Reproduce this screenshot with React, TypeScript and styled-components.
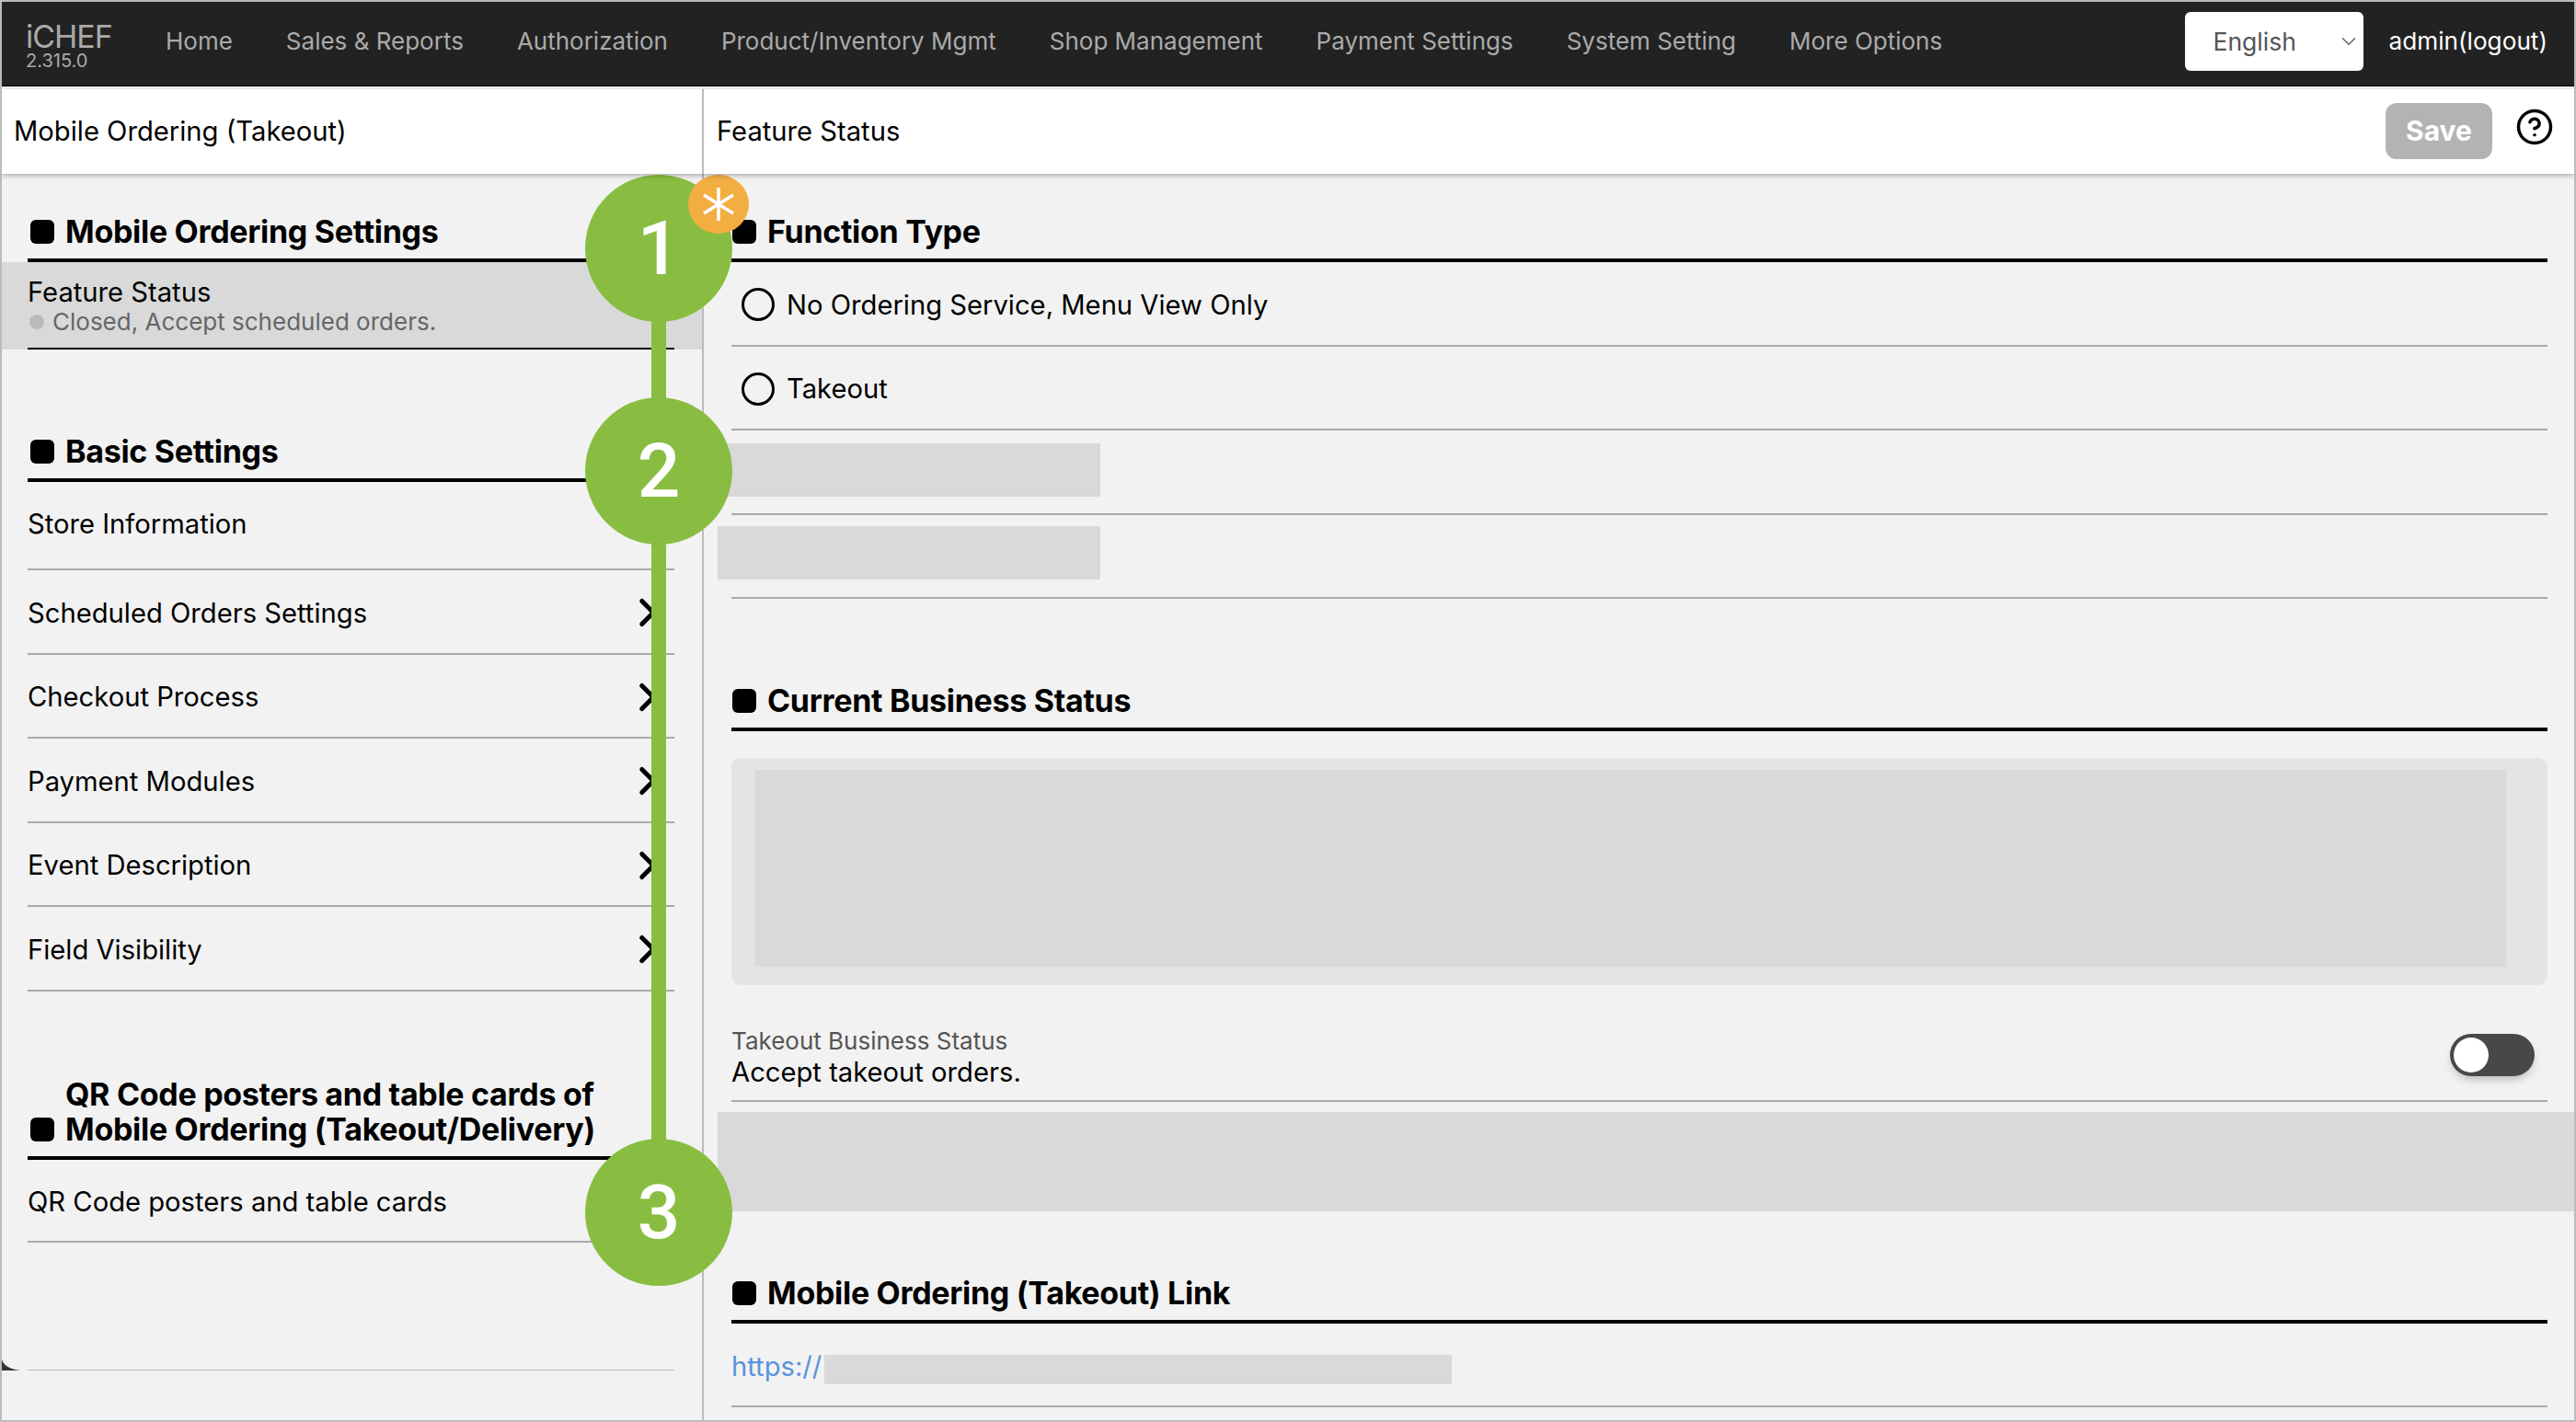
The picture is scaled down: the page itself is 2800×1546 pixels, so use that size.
import React from "react";
import styled, { createGlobalStyle } from "styled-components";
import { ChevronRight, ChevronDown, CircleHelp } from "lucide-react";

const GlobalStyle = createGlobalStyle`
  html, body {
    margin: 0;
    padding: 0;
    background: #f2f2f2;
  }
  * {
    box-sizing: border-box;
  }
`;

const Page = styled.div`
  position: relative;
  width: 2800px;
  height: 1546px;
  overflow: hidden;
  display: flex;
  flex-direction: column;
  border: 2px solid #bbb;
  background: #f2f2f2;
  color: #000;
  font-family: Inter, "Liberation Sans", sans-serif;
  font-size: 29.2px;
`;

const NavBar = styled.header`
  height: 92px;
  flex-shrink: 0;
  display: flex;
  align-items: center;
  background: #222;
  padding: 0 29px 6px 26px;
  border-bottom: 1px solid #000;
`;

const Logo = styled.div`
  width: 152px;
  color: #aaa;
  margin-top: 10px;
`;

const LogoName = styled.div`
  font-size: 34px;
  line-height: 33px;
  letter-spacing: -1px;
`;

const LogoVersion = styled.div`
  font-size: 20px;
  line-height: 20px;
`;

const NavMenu = styled.nav`
  display: flex;
  gap: 58px;
  flex: 1;
`;

const NavLink = styled.span`
  color: #aaa;
  font-size: 26px;
`;

const SelectWrap = styled.div`
  position: relative;
  width: 194px;
  height: 64px;
  margin-right: 28px;
  color: #666;
`;

const LangSelect = styled.select`
  appearance: none;
  width: 100%;
  height: 100%;
  border: 0;
  border-radius: 6px;
  background: #fff;
  color: #555;
  padding-left: 31px;
  font-family: inherit;
  font-size: 26.5px;
`;

const SelectArrow = styled(ChevronDown)`
  position: absolute;
  right: 3px;
  top: 19px;
  pointer-events: none;
`;

const UserLink = styled.span`
  color: #fff;
  font-size: 26.2px;
`;

const HeaderRow = styled.div`
  position: relative;
  z-index: 1;
  height: 92px;
  margin-top: 3px;
  flex-shrink: 0;
  display: flex;
  background: #fff;
  box-shadow: 0 2px 5px rgba(0, 0, 0, 0.28);
`;

const HeaderLeft = styled.div`
  width: 763px;
  display: flex;
  align-items: center;
  padding: 0 13px 2px;
  border-right: 2px solid #bbb;
`;

const HeaderRight = styled.div`
  flex: 1;
  display: flex;
  align-items: center;
  justify-content: space-between;
  padding: 0 22px 2px 14px;
`;

const HeaderActions = styled.div`
  display: flex;
  align-items: center;
  gap: 25px;
`;

const SaveButton = styled.button`
  width: 116px;
  height: 61px;
  border: 0;
  border-radius: 12px;
  background: #b3b3b3;
  color: #fff;
  font-family: inherit;
  font-size: 30px;
  font-weight: 700;
`;

const HelpIcon = styled(CircleHelp)`
  margin-bottom: 8px;
`;

const Body = styled.div`
  flex: 1;
  display: flex;
  min-height: 0;
`;

const Sidebar = styled.aside`
  position: relative;
  width: 763px;
  flex-shrink: 0;
  padding-top: 44px;
  border-right: 2px solid #bbb;
`;

const Main = styled.main`
  flex: 1;
  padding: 44px 29px 0 30px;
`;

const SectionHeading = styled.h2<{ $top?: number; $inset?: boolean }>`
  display: flex;
  align-items: flex-end;
  gap: 12px;
  margin: ${(p) => p.$top ?? 0}px ${(p) => (p.$inset ? "30px" : "0")} 0
    ${(p) => (p.$inset ? "28px" : "0")};
  padding: 0 0 10px ${(p) => (p.$inset ? "3px" : "1px")};
  border-bottom: 4px solid #000;
  font-size: 34px;
  line-height: 38px;
  font-weight: 700;
  letter-spacing: -0.3px;
`;

const Bullet = styled.span`
  width: 26px;
  height: 26px;
  flex-shrink: 0;
  margin-bottom: 6px;
  border-radius: 6px;
  background: #000;
`;

const SideItem = styled.div<{ $height?: number; $padTop?: number; $padBottom?: number }>`
  height: ${(p) => p.$height ?? 91.5}px;
  margin: 0 30px 0 28px;
  display: flex;
  align-items: center;
  justify-content: space-between;
  padding: ${(p) => p.$padTop ?? 3}px 4px ${(p) => p.$padBottom ?? 0}px 0;
  border-bottom: 2px solid #aaa;
`;

const SelectedBand = styled.div`
  height: 95px;
  padding: 0 30px 0 28px;
  background: #d9d9d9;
`;

const SelectedInner = styled.div`
  height: 100%;
  padding-top: 15px;
  border-bottom: 2px solid #000;
`;

const SelectedTitle = styled.div`
  line-height: 36px;
`;

const StatusLine = styled.div`
  display: flex;
  align-items: center;
  gap: 9px;
  color: #666;
  font-size: 26px;
  line-height: 28px;
`;

const StatusDot = styled.span`
  width: 16px;
  height: 16px;
  margin-left: 2px;
  border-radius: 50%;
  background: #bbb;
`;

const SideFooterLine = styled.div`
  margin: 138px 30px 0 28px;
  border-top: 1px solid #bbb;
`;

const CornerMark = styled.svg`
  position: absolute;
  left: 0;
  bottom: 54px;
  display: block;
`;

const OptionRow = styled.div`
  height: 91.5px;
  display: flex;
  align-items: center;
  gap: 13px;
  padding: 3px 0 0 11px;
  border-bottom: 2px solid #aaa;
`;

const Radio = styled.span`
  width: 36px;
  height: 36px;
  border: 3px solid #000;
  border-radius: 50%;
`;

const MaskRow = styled.div<{ $padTop: number }>`
  height: 91.5px;
  padding-top: ${(p) => p.$padTop}px;
  border-bottom: 2px solid #aaa;
`;

const MaskBlock = styled.div`
  width: 416px;
  height: 58px;
  margin-left: -15px;
  background: #d9d9d9;
`;

const InfoPanel = styled.div`
  height: 247px;
  margin-top: 29px;
  padding: 13px 45px 20px 26px;
  border-radius: 10px;
  background: #e4e4e4;
`;

const InfoPanelMask = styled.div`
  height: 100%;
  background: #d9d9d9;
`;

const StatusRow = styled.div`
  height: 127px;
  display: flex;
  align-items: center;
  justify-content: space-between;
  padding: 30px 14px 0 0;
  border-bottom: 2px solid #aaa;
`;

const StatusLabel = styled.div`
  color: #555;
  font-size: 26px;
  line-height: 33px;
`;

const StatusValue = styled.div`
  line-height: 35px;
`;

const Toggle = styled.span`
  width: 92px;
  height: 46px;
  margin-top: -4px;
  padding: 4px;
  border-radius: 23px;
  background: #484848;
  box-shadow: 0 6px 12px -4px rgba(0, 0, 0, 0.3);
`;

const ToggleKnob = styled.span`
  display: block;
  width: 38px;
  height: 38px;
  border-radius: 50%;
  background: #fff;
`;

const WideMask = styled.div`
  height: 108px;
  margin: 11px -29px 0 -15px;
  background: #d9d9d9;
`;

const LinkRow = styled.div`
  height: 91px;
  padding-top: 34px;
  display: flex;
  align-items: flex-start;
  border-bottom: 2px solid #aaa;
`;

const UrlLink = styled.a`
  width: 101px;
  color: #5a93dc;
  line-height: 26px;
`;

const UrlMask = styled.span`
  width: 682px;
  height: 32px;
  background: #d9d9d9;
`;

const Timeline = styled.div`
  position: absolute;
  left: 634px;
  top: 188px;
  width: 160px;
  height: 1208px;
  display: flex;
  flex-direction: column;
  align-items: center;
`;

const TimelineLine = styled.span`
  position: absolute;
  top: 80px;
  bottom: 80px;
  width: 16px;
  background: #89bd41;
`;

const StepCircle = styled.div<{ $top: number }>`
  position: absolute;
  top: ${(p) => p.$top}px;
  width: 160px;
  height: 160px;
  display: flex;
  align-items: center;
  justify-content: center;
  border-radius: 50%;
  background: #89bd41;
  color: #fff;
  font-family: Roboto, "Liberation Sans", sans-serif;
  font-size: 82px;
  font-weight: 500;
`;

const NoteBadge = styled.div`
  position: absolute;
  left: 112px;
  top: 0;
  width: 66px;
  height: 64px;
  display: flex;
  align-items: center;
  justify-content: center;
  border-radius: 50%;
  background: #f3ae42;
`;

const sideItems = [
  "Scheduled Orders Settings",
  "Checkout Process",
  "Payment Modules",
  "Event Description",
  "Field Visibility",
];

const menuItems = [
  "Home",
  "Sales & Reports",
  "Authorization",
  "Product/Inventory Mgmt",
  "Shop Management",
  "Payment Settings",
  "System Setting",
  "More Options",
];

export default function App() {
  return (
    <Page>
      <GlobalStyle />
      <NavBar>
        <Logo>
          <LogoName>iCHEF</LogoName>
          <LogoVersion>2.315.0</LogoVersion>
        </Logo>
        <NavMenu>
          {menuItems.map((item) => (
            <NavLink key={item}>{item}</NavLink>
          ))}
        </NavMenu>
        <SelectWrap>
          <LangSelect defaultValue="English">
            <option>English</option>
          </LangSelect>
          <SelectArrow size={26} strokeWidth={1.4} />
        </SelectWrap>
        <UserLink>admin(logout)</UserLink>
      </NavBar>

      <HeaderRow>
        <HeaderLeft>Mobile Ordering (Takeout)</HeaderLeft>
        <HeaderRight>
          Feature Status
          <HeaderActions>
            <SaveButton>Save</SaveButton>
            <HelpIcon size={42} strokeWidth={2} />
          </HeaderActions>
        </HeaderRight>
      </HeaderRow>

      <Body>
        <Sidebar>
          <SectionHeading $inset>
            <Bullet />
            Mobile Ordering Settings
          </SectionHeading>
          <SelectedBand>
            <SelectedInner>
              <SelectedTitle>Feature Status</SelectedTitle>
              <StatusLine>
                <StatusDot />
                Closed, Accept scheduled orders.
              </StatusLine>
            </SelectedInner>
          </SelectedBand>

          <SectionHeading $inset $top={92}>
            <Bullet />
            Basic Settings
          </SectionHeading>
          <SideItem $height={96} $padTop={0} $padBottom={4}>
            Store Information
          </SideItem>
          {sideItems.map((item) => (
            <SideItem key={item}>
              {item}
              <ChevronRight size={50} strokeWidth={2.4} />
            </SideItem>
          ))}

          <SectionHeading $inset $top={93}>
            <Bullet />
            <span>
              QR Code posters and table cards of
              <br />
              Mobile Ordering (Takeout/Delivery)
            </span>
          </SectionHeading>
          <SideItem $height={90}>QR Code posters and table cards</SideItem>
          <SideFooterLine />
          <CornerMark width="20" height="12" viewBox="0 0 20 12">
            <path d="M0 0 C2 6 7 10 20 12 L0 12 Z" fill="#333" />
          </CornerMark>
        </Sidebar>

        <Main>
          <SectionHeading>
            <Bullet />
            Function Type
          </SectionHeading>
          <OptionRow>
            <Radio />
            No Ordering Service, Menu View Only
          </OptionRow>
          <OptionRow>
            <Radio />
            Takeout
          </OptionRow>
          <MaskRow $padTop={14}>
            <MaskBlock />
          </MaskRow>
          <MaskRow $padTop={12}>
            <MaskBlock />
          </MaskRow>

          <SectionHeading $top={92}>
            <Bullet />
            Current Business Status
          </SectionHeading>
          <InfoPanel>
            <InfoPanelMask />
          </InfoPanel>
          <StatusRow>
            <div>
              <StatusLabel>Takeout Business Status</StatusLabel>
              <StatusValue>Accept takeout orders.</StatusValue>
            </div>
            <Toggle>
              <ToggleKnob />
            </Toggle>
          </StatusRow>
          <WideMask />

          <SectionHeading $top={70}>
            <Bullet />
            Mobile Ordering (Takeout) Link
          </SectionHeading>
          <LinkRow>
            <UrlLink>https://</UrlLink>
            <UrlMask />
          </LinkRow>
        </Main>
      </Body>

      <Timeline>
        <TimelineLine />
        <StepCircle $top={0}>1</StepCircle>
        <StepCircle $top={242}>2</StepCircle>
        <StepCircle $top={1048}>3</StepCircle>
        <NoteBadge>
          <svg width="38" height="40" viewBox="0 0 38 40">
            <path
              d="M19 2V38M3 10L35 30M35 10L3 30"
              stroke="#fff"
              strokeWidth="3.5"
              fill="none"
            />
          </svg>
        </NoteBadge>
      </Timeline>
    </Page>
  );
}
